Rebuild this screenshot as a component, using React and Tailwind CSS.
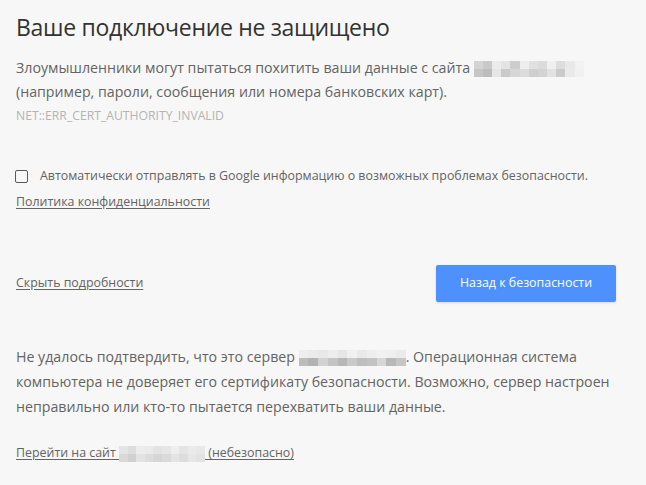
import React from "react";

const row1 = ["bg-[#d4d4d4]", "bg-[#c9c9c9]", "bg-[#ececec]", "bg-[#e4e4e4]", "bg-[#cdcdcd]", "bg-[#eeeeee]", "bg-[#e1e1e1]", "bg-[#dcdcdc]", "bg-[#f0f0f0]", "bg-[#dddddd]", "bg-[#e9e9e9]", "bg-[#f2f2f2]"];
const row2 = ["bg-[#c6c6c6]", "bg-[#bdbdbd]", "bg-[#e6e6e6]", "bg-[#cacaca]", "bg-[#d6d6d6]", "bg-[#dcdcdc]", "bg-[#cfcfcf]", "bg-[#d3d3d3]", "bg-[#e2e2e2]", "bg-[#cbcbcb]", "bg-[#eaeaea]", "bg-[#f1f1f1]"];
const row3 = ["bg-[#eeeeee]", "bg-[#ebebeb]", "bg-[#e8e8e8]", "bg-[#ededed]", "bg-[#e6e6e6]", "bg-[#f0f0f0]", "bg-[#e9e9e9]", "bg-[#eeeeee]", "bg-[#f1f1f1]", "bg-[#efefef]", "bg-[#ebebeb]"];
const row4 = ["bg-[#bcbcbc]", "bg-[#b3b3b3]", "bg-[#d2d2d2]", "bg-[#c4c4c4]", "bg-[#b7b7b7]", "bg-[#c9c9c9]", "bg-[#bebebe]", "bg-[#c2c2c2]", "bg-[#d6d6d6]", "bg-[#b8b8b8]", "bg-[#c6c6c6]"];
const row5 = ["bg-[#e4e4e4]", "bg-[#dddddd]", "bg-[#ececec]", "bg-[#eaeaea]", "bg-[#e3e3e3]", "bg-[#e6e6e6]", "bg-[#eeeeee]", "bg-[#e5e5e5]", "bg-[#ebebeb]", "bg-[#e8e8e8]"];
const row6 = ["bg-[#d9d9d9]", "bg-[#d0d0d0]", "bg-[#e3e3e3]", "bg-[#dcdcdc]", "bg-[#d6d6d6]", "bg-[#dadada]", "bg-[#e4e4e4]", "bg-[#dddddd]", "bg-[#e7e7e7]", "bg-[#e2e2e2]"];

const Blur = ({ top, bottom, width }) => (
  <span className={`inline-flex flex-col align-middle ${width}`}>
    <span className="flex h-[8px]">
      {top.map((c, i) => (
        <span key={i} className={`flex-1 ${c}`} />
      ))}
    </span>
    <span className="flex h-[8px]">
      {bottom.map((c, i) => (
        <span key={i} className={`flex-1 ${c}`} />
      ))}
    </span>
  </span>
);

export default function App() {
  return (
    <div className="min-h-screen bg-[#f7f7f7] text-[#646464] font-['Segoe_UI','Open_Sans',sans-serif] text-[14.2px]">
      <div className="px-4 pt-[12px]">
        <h1 className="text-[23px] leading-[30px] text-[#333333] tracking-[-0.3px] mb-[14px]">
          Ваше подключение не защищено
        </h1>

        <p className="leading-[24px]">
          Злоумышленники могут пытаться похитить ваши данные с сайта{" "}
          <Blur top={row1} bottom={row2} width="w-[110px]" />
          <br />
          (например, пароли, сообщения или номера банковских карт).
        </p>
        <div className="text-[12.2px] leading-[24px] text-[#b4b4b4]">NET::ERR_CERT_AUTHORITY_INVALID</div>

        <label className="flex items-center gap-[12px] mt-[39px] text-[12.4px] leading-[18px]">
          <span className="ml-[-1px] w-[13px] h-[13px] rounded-[2px] border border-[#5a5a5a] bg-transparent" />
          <span>Автоматически отправлять в Google информацию о возможных проблемах безопасности.</span>
        </label>
        <a className="block mt-[8px] text-[12.4px] leading-[18px] underline underline-offset-2">
          Политика конфиденциальности
        </a>

        <div className="flex items-center justify-between mt-[54px] pr-[14px]">
          <a className="text-[12.4px] underline underline-offset-2">Скрыть подробности</a>
          <button className="w-[180px] h-[37px] rounded-[2px] bg-[#4d90fe] text-white text-[12.4px] shadow-sm">
            Назад к безопасности
          </button>
        </div>

        <p className="mt-[42px] leading-[25px] pr-4">
          Не удалось подтвердить, что это сервер{" "}
          <Blur top={row3} bottom={row4} width="w-[107px]" />. Операционная система компьютера не доверяет его
          сертификату безопасности. Возможно, сервер настроен неправильно или кто-то пытается перехватить ваши
          данные.
        </p>

        <a className="block mt-[25px] text-[12.4px] underline underline-offset-2">
          Перейти на сайт <Blur top={row5} bottom={row6} width="w-[86px]" /> (небезопасно)
        </a>
      </div>
    </div>
  );
}
